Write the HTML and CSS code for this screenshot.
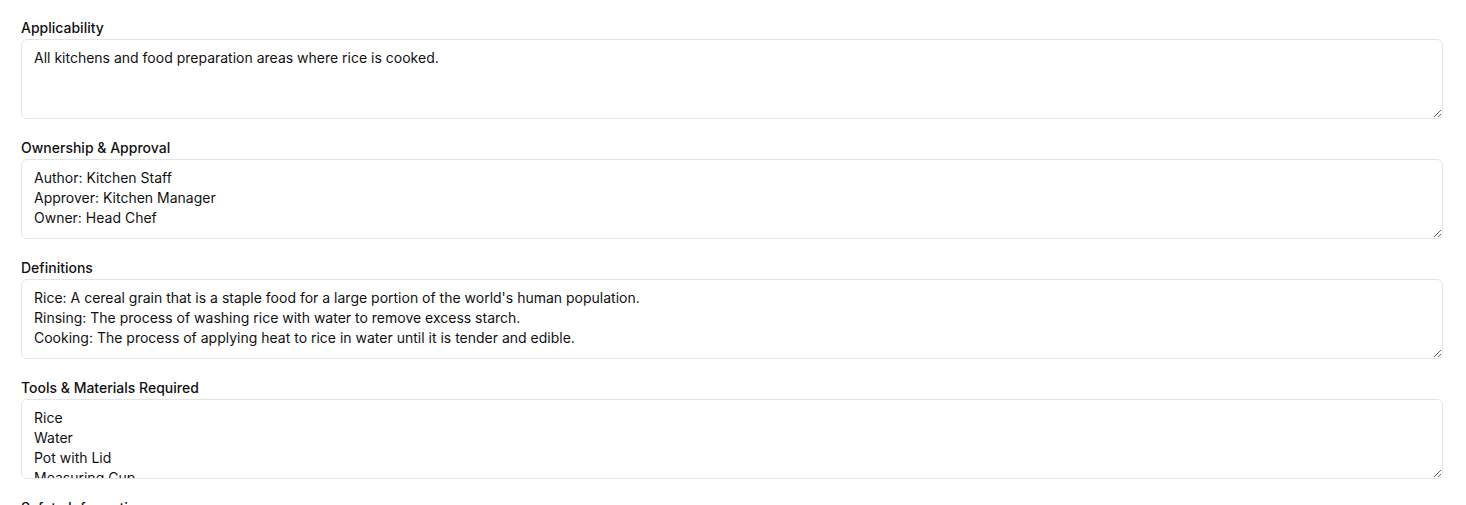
FILE: index.html
```html
<!DOCTYPE html>
<html lang="en">
<head>
  <meta charset="UTF-8" />
  <title>SOP - Cooking Rice</title>
  <link rel="stylesheet" href="styles.css">
</head>
<body>
  <div class="sop-form">
    <div class="field">
      <label for="applicability">Applicability</label>
      <textarea id="applicability">All kitchens and food preparation areas where rice is cooked.</textarea>
    </div>

    <div class="field">
      <label for="ownership">Ownership &amp; Approval</label>
      <textarea id="ownership">Author: Kitchen Staff
Approver: Kitchen Manager
Owner: Head Chef</textarea>
    </div>

    <div class="field">
      <label for="definitions">Definitions</label>
      <textarea id="definitions">Rice: A cereal grain that is a staple food for a large portion of the world's human population.
Rinsing: The process of washing rice with water to remove excess starch.
Cooking: The process of applying heat to rice in water until it is tender and edible.</textarea>
    </div>

    <div class="field">
      <label for="tools">Tools &amp; Materials Required</label>
      <textarea id="tools">Rice
Water
Pot with Lid
Measuring Cup
Strainer
Wooden Spoon</textarea>
    </div>

    <div class="field">
      <label for="safety">Safety Information</label>
      <textarea id="safety">Use oven mitts when handling hot pots.
Keep handles turned away from the edge of the stove.</textarea>
    </div>
  </div>
</body>
</html>
```

FILE: styles.css
```css
body, html {
  margin: 0;
  padding: 0;
  background-color: #ffffff;
  font-family: Inter, 'Noto Sans', sans-serif;
  color: #111111;
}

.sop-form {
  display: flex;
  flex-direction: column;
  gap: 19px;
  padding: 18px 23px 18px 21px;
}

.field {
  display: flex;
  flex-direction: column;
}

.field label {
  font-size: 14px;
  line-height: 20px;
  font-weight: 500;
  color: #111111;
  margin-bottom: 1px;
}

.field textarea {
  box-sizing: border-box;
  height: 80px;
  width: 100%;
  margin: 0;
  padding: 8px 12px;
  font-family: Inter, 'Noto Sans', sans-serif;
  font-size: 14px;
  line-height: 20px;
  color: #111111;
  border: 1px solid #e4e4e7;
  border-radius: 6px;
  background-color: #ffffff;
  outline: none;
}
```
